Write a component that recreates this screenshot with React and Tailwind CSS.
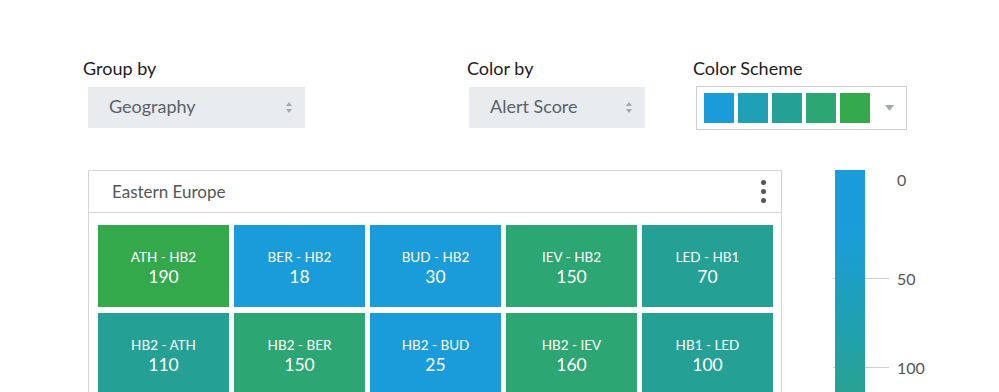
import React from 'react';

const SCHEME = ['#1a9cdb', '#20a0b7', '#24a194', '#2ca672', '#34a94b'];

const tiles = [
    { name: 'ATH - HB2', value: 190, color: '#34a94b' },
    { name: 'BER - HB2', value: 18, color: '#1a9cdb' },
    { name: 'BUD - HB2', value: 30, color: '#1a9cdb' },
    { name: 'IEV - HB2', value: 150, color: '#2ca672' },
    { name: 'LED - HB1', value: 70, color: '#24a194' },
    { name: 'HB2 - ATH', value: 110, color: '#24a194' },
    { name: 'HB2 - BER', value: 150, color: '#2ca672' },
    { name: 'HB2 - BUD', value: 25, color: '#1a9cdb' },
    { name: 'HB2 - IEV', value: 160, color: '#2ca672' },
    { name: 'HB1 - LED', value: 100, color: '#24a194' },
];

const SortArrows = () => (
    <svg width="6" height="11" viewBox="0 0 6 11" className="shrink-0">
        <path d="M3 0 L6 4 L0 4 Z" fill="#a3a8ad" />
        <path d="M3 11 L6 7 L0 7 Z" fill="#a3a8ad" />
    </svg>
);

const Select = ({ value, width }) => (
    <div className={`${width} h-[41px] bg-[#e8ecef] flex items-center justify-between pl-[21px] pr-[13px]`}>
        <span className="text-[18px] leading-[22px] text-[#5b6167] -mt-[3px]">{value}</span>
        <SortArrows />
    </div>
);

const Tile = ({ name, value, color }) => (
    <div className="h-[82px] flex flex-col items-center pt-[23px] text-white" style={{ backgroundColor: color }}>
        <span className="text-[13.5px] leading-[18px]">{name}</span>
        <span className="text-[17.5px] leading-[22px]">{value}</span>
    </div>
);

export default function App() {
    return (
        <div className="w-[999px] h-[392px] overflow-hidden bg-white font-['Lato',sans-serif]">
            {/* Controls */}
            <div className="flex items-start pt-[58px] h-[130px]">
                <div className="ml-[83px] w-[384px]">
                    <div className="text-[18px] leading-[20px] text-[#1c1c1c]">Group by</div>
                    <div className="mt-[9px] ml-[5px]">
                        <Select value="Geography" width="w-[217px]" />
                    </div>
                </div>
                <div className="w-[226px]">
                    <div className="text-[18px] leading-[20px] text-[#1c1c1c]">Color by</div>
                    <div className="mt-[9px] ml-[2px]">
                        <Select value="Alert Score" width="w-[176px]" />
                    </div>
                </div>
                <div>
                    <div className="text-[18px] leading-[20px] text-[#1c1c1c]">Color Scheme</div>
                    <div className="mt-[8px] ml-[3px] w-[211px] h-[44px] border border-[#cfcfcf] flex items-center pl-[7px]">
                        <div className="flex gap-[4px]">
                            {SCHEME.map((c) => (
                                <div key={c} className="w-[30px] h-[30px]" style={{ backgroundColor: c }} />
                            ))}
                        </div>
                        <svg width="9" height="6" viewBox="0 0 9 6" className="ml-[15px]">
                            <path d="M0 0 L9 0 L4.5 6 Z" fill="#a3a8ad" />
                        </svg>
                    </div>
                </div>
            </div>

            {/* Panel + legend */}
            <div className="flex items-start mt-[40px]">
                <div className="ml-[88px] w-[694px] h-[260px] border border-[#d5d5d5]">
                    <div className="h-[42px] border-b border-[#d5d5d5] flex items-center justify-between pl-[23px] pr-[15px]">
                        <span className="text-[17px] text-[#555]">Eastern Europe</span>
                        <div className="flex flex-col gap-[4px]">
                            <div className="w-[5px] h-[5px] rounded-full bg-[#555]" />
                            <div className="w-[5px] h-[5px] rounded-full bg-[#555]" />
                            <div className="w-[5px] h-[5px] rounded-full bg-[#555]" />
                        </div>
                    </div>
                    <div className="grid grid-cols-[repeat(5,131px)] gap-x-[5px] gap-y-[6px] pt-[12px] pl-[9px]">
                        {tiles.map((t) => (
                            <Tile key={t.name} {...t} />
                        ))}
                    </div>
                </div>

                {/* Legend */}
                <div className="relative ml-[53px] w-[120px] h-[222px]">
                    <div className="absolute left-[-2px] top-[108px] w-[56px] h-px bg-[#cfcfcf]" />
                    <div className="absolute left-[-2px] top-[197px] w-[56px] h-px bg-[#cfcfcf]" />
                    <div className="absolute left-0 top-0 w-[30px] h-[222px] bg-gradient-to-b from-[#1a9cdb] from-[25%] to-[#28a292]" />
                    <span className="absolute left-[62px] top-[0px] text-[16px] leading-[20px] text-[#555]">0</span>
                    <span className="absolute left-[62px] top-[99px] text-[16px] leading-[20px] text-[#555]">50</span>
                    <span className="absolute left-[62px] top-[188px] text-[16px] leading-[20px] text-[#555]">100</span>
                </div>
            </div>
        </div>
    );
}
